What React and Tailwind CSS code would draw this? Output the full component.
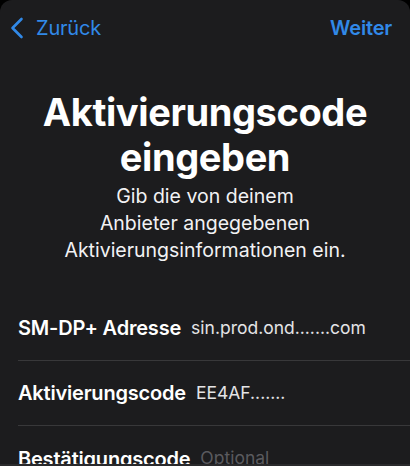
import React from 'react';

const rows = [
    { label: "SM-DP+ Adresse", value: "sin.prod.ond.......com", muted: false },
    { label: "Aktivierungscode", value: "EE4AF.......", muted: false },
    { label: "Bestätigungscode", value: "Optional", muted: true }
];

export default function App() {
    return (
        <div className="w-[410px] h-[466px] bg-black overflow-hidden flex flex-col" style={{ fontFamily: "Inter, 'Liberation Sans', sans-serif" }}>
            <div className="flex-1 min-h-0 overflow-hidden bg-[#1c1c1e] rounded-t-[12px]">
                {/* nav bar */}
                <div className="flex items-center justify-between h-[56px] pl-[10px] pr-[18px]">
                    <button className="flex items-center gap-[12px] text-[#3189e8]">
                        <svg width="14" height="22" viewBox="0 0 14 22" fill="none">
                            <path d="M11.5 2 L2.5 11 L11.5 20" stroke="currentColor" strokeWidth="2.6" strokeLinecap="round" strokeLinejoin="round" />
                        </svg>
                        <span className="text-[20px] tracking-[-0.2px]">Zurück</span>
                    </button>
                    <button className="text-[20px] font-semibold text-[#3189e8] tracking-[-0.2px]">Weiter</button>
                </div>

                {/* heading */}
                <div className="flex flex-col items-center text-center mt-[34px]">
                    <h1 className="text-[38px] leading-[45px] font-bold text-white tracking-[-0.4px]">
                        Aktivierungscode<br />eingeben
                    </h1>
                    <p className="mt-[3px] text-[19.5px] leading-[27px] text-[#f2f2f4]">
                        Gib die von deinem<br />Anbieter angegebenen<br />Aktivierungsinformationen ein.
                    </p>
                </div>

                {/* fields */}
                <div className="mt-[32px] pl-[18px]">
                    {rows.map((r, i) => (
                        <div key={r.label} className={"flex items-center h-[65px] " + (i < rows.length - 1 ? "border-b border-[#38383a]" : "")}>
                            <span className="text-[20px] font-semibold text-white tracking-[-0.2px]">{r.label}</span>
                            <span className={"ml-[10px] text-[17.5px] " + (r.muted ? "text-[#5a5a5e]" : "text-[#e4e4e6]")}>{r.value}</span>
                        </div>
                    ))}
                </div>
            </div>
            <div className="h-[2px] shrink-0 bg-[#2a2a2c]" />
        </div>
    );
}
